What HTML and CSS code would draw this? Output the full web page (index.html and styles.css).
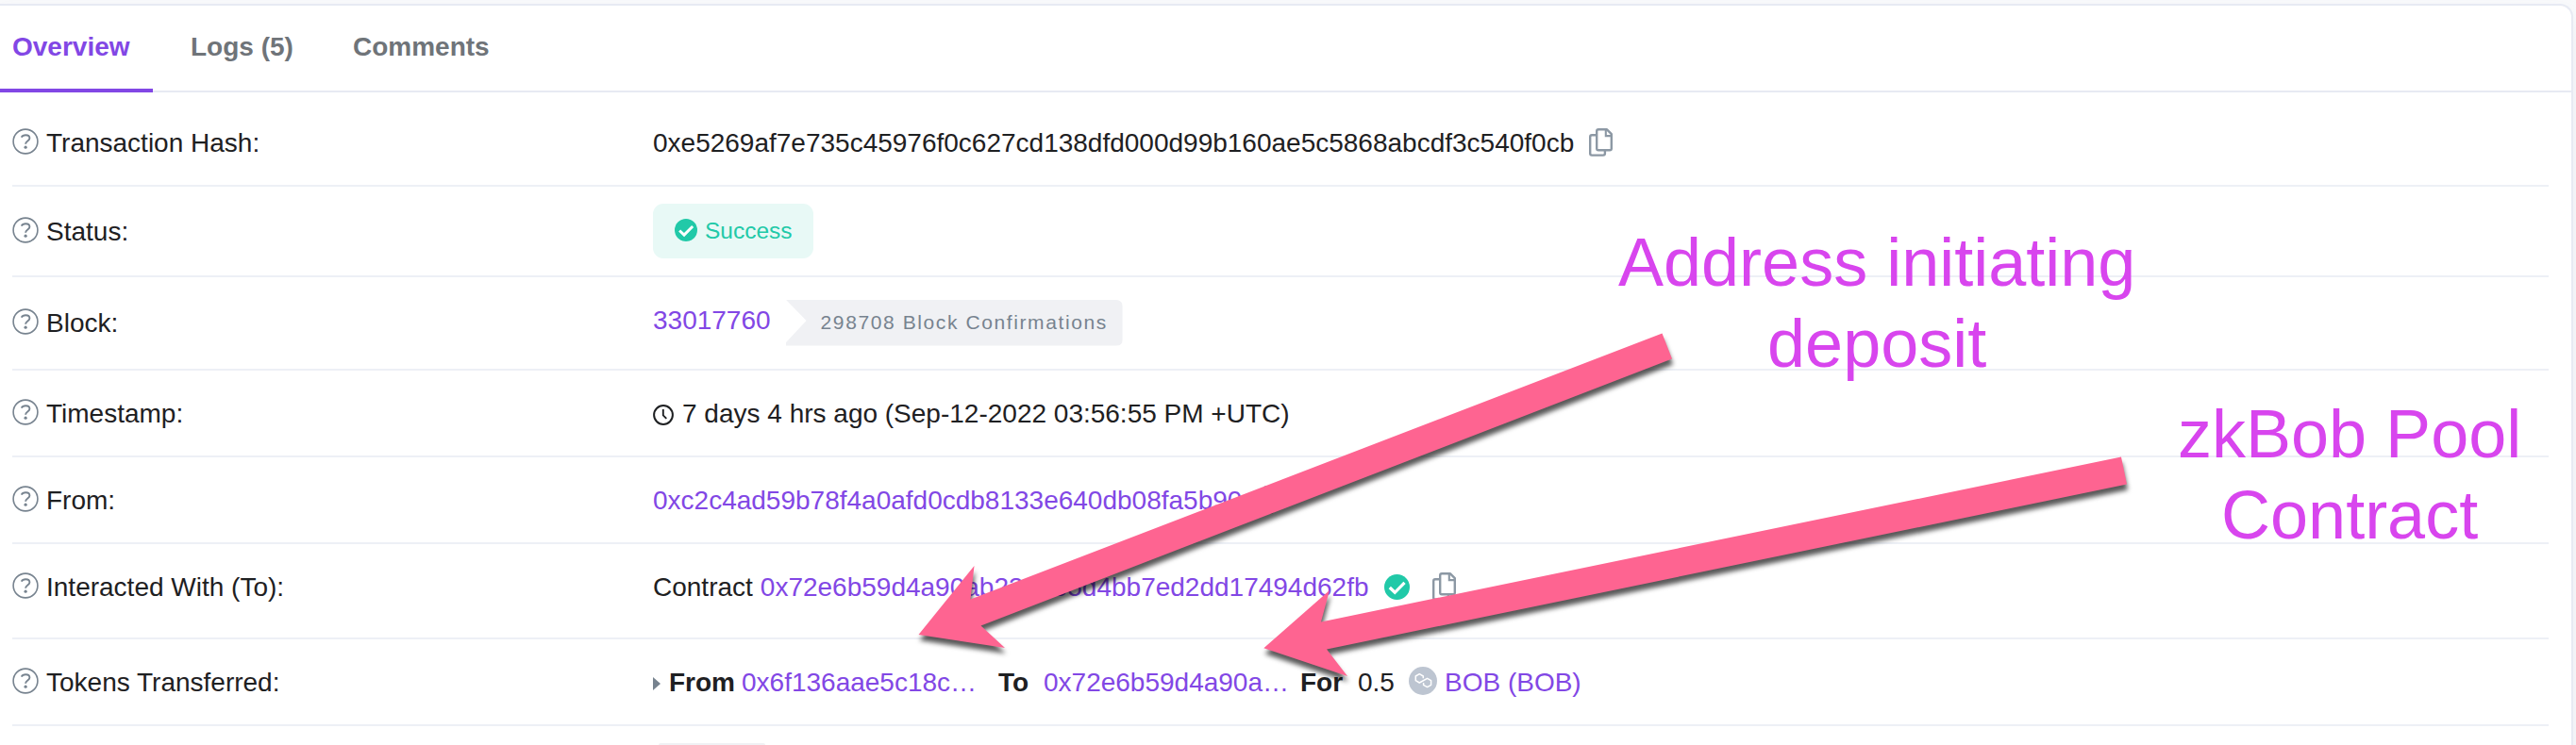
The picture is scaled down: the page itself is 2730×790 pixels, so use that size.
FILE: index.html
```html
<!DOCTYPE html>
<html lang="en">
<head>
<meta charset="utf-8">
<title>Transaction Details</title>
<link rel="stylesheet" href="styles.css">
</head>
<body>
<svg class="defs" aria-hidden="true">
  <symbol id="help" viewBox="0 0 28 28">
    <circle cx="14" cy="14" r="12.900" fill="none" stroke="currentColor" stroke-width="1.600"/>
    <path d="M9.700 9.600C10.600 8 12 7.300 14.200 7.300C16.800 7.300 18.400 8.600 18.400 10.600C18.400 13.700 14.100 13.500 14.100 16.800" fill="none" stroke="currentColor" stroke-width="1.900"/>
    <circle cx="14.100" cy="20.200" r="1.600" fill="currentColor"/>
  </symbol>
  <symbol id="copy" viewBox="0 0 25 30">
    <path d="M8 7.200H3Q1.200 7.200 1.200 9.100V26.800Q1.200 28.600 3 28.600H15Q16.900 28.600 16.900 26.800V24" fill="none" stroke="currentColor" stroke-width="2.400"/>
    <path d="M10 1.300H19L23.800 6.200V21.500Q23.800 23.300 22 23.300H10Q8.200 23.300 8.200 21.500V3.100Q8.200 1.300 10 1.300Z" fill="none" stroke="currentColor" stroke-width="2.400" stroke-linejoin="round"/>
    <path d="M17.800 1.600V8.100H23.800" fill="none" stroke="currentColor" stroke-width="2.100"/>
  </symbol>
  <symbol id="check" viewBox="0 0 28 28">
    <circle cx="14" cy="14" r="14" fill="currentColor"/>
    <path d="M6 14.500L11.700 20L22.300 9.300" fill="none" class="tick" stroke-width="3.400"/>
  </symbol>
</svg>

<main class="card">
  <nav class="tabs">
    <a class="tab active">Overview</a>
    <a class="tab logs">Logs (5)</a>
    <a class="tab">Comments</a>
  </nav>
  <section class="details">
    <div class="row r-hash">
      <div class="label"><svg class="help"><use href="#help"/></svg>Transaction Hash:</div>
      <div class="value"><span>0xe5269af7e735c45976f0c627cd138dfd000d99b160ae5c5868abcdf3c540f0cb</span><svg class="copy"><use href="#copy"/></svg></div>
    </div>
    <div class="row r-status">
      <div class="label"><svg class="help"><use href="#help"/></svg>Status:</div>
      <div class="value"><span class="success"><svg><use href="#check"/></svg>Success</span></div>
    </div>
    <div class="row r-block">
      <div class="label"><svg class="help"><use href="#help"/></svg>Block:</div>
      <div class="value"><a class="number">33017760</a><span class="confirm">298708 Block Confirmations</span></div>
    </div>
    <div class="row r-time">
      <div class="label"><svg class="help"><use href="#help"/></svg>Timestamp:</div>
      <div class="value"><svg class="clock" viewBox="0 0 22 22"><circle cx="11" cy="11" r="9.900" fill="none" stroke="currentColor" stroke-width="2"/><path d="M10.800 5V11.300L14.300 14.800" fill="none" stroke="currentColor" stroke-width="1.900"/></svg><span>7 days 4 hrs ago (Sep-12-2022 03:56:55 PM +UTC)</span></div>
    </div>
    <div class="row r-from">
      <div class="label"><svg class="help"><use href="#help"/></svg>From:</div>
      <div class="value"><a>0xc2c4ad59b78f4a0afd0cdb8133e640db08fa5b90</a><svg class="copy"><use href="#copy"/></svg></div>
    </div>
    <div class="row r-to">
      <div class="label"><svg class="help"><use href="#help"/></svg>Interacted With (To):</div>
      <div class="value"><span class="kind">Contract</span><a>0x72e6b59d4a90ab232e55d4bb7ed2dd17494d62fb</a><svg class="verified"><use href="#check"/></svg><svg class="copy"><use href="#copy"/></svg></div>
    </div>
    <div class="row r-tokens">
      <div class="label"><svg class="help"><use href="#help"/></svg>Tokens Transferred:</div>
      <div class="value">
        <svg class="caret" viewBox="0 0 8 14"><path d="M0 0L8 7L0 14Z" fill="currentColor"/></svg>
        <b class="t-from">From</b><a class="t-src">0x6f136aae5c18c…</a>
        <b class="t-to">To</b><a class="t-dst">0x72e6b59d4a90a…</a>
        <b class="t-for">For</b><span class="t-amount">0.5</span>
        <svg class="token" viewBox="0 0 30 30"><circle cx="15" cy="15" r="15" fill="#bdc5d1"/><path d="M15.300 12.300V10L11.300 7.700L7.300 10V14.700L11.300 17L19.600 12.300L23.600 14.600V19.300L19.600 21.600L15.600 19.300V17" fill="none" stroke="#fff" stroke-width="1.500" stroke-linejoin="round"/></svg>
        <a>BOB (BOB)</a>
      </div>
    </div>
    <div class="row r-next"><div class="label"></div><span class="stub"></span></div>
  </section>
</main>

<svg class="arrows" viewBox="0 0 2730 790" aria-hidden="true">
  <polygon points="973.500,673 1032.500,600 1028.500,635.500 1761.500,353.500 1772,380.500 1039.500,663.500 1065,687"/>
  <polygon points="1339.300,687.300 1409,626 1400,659.500 2248,484.500 2254,513.500 1406,688.500 1428,717"/>
</svg>
<p class="note note-address">Address initiating<br>deposit</p>
<p class="note note-pool">zkBob Pool<br>Contract</p>
</body>
</html>
```
FILE: styles.css
```css
* { box-sizing: border-box; }

body {
  margin: 0;
  width: 2730px;
  height: 790px;
  overflow: hidden;
  position: relative;
  padding-top: 4px;
  background: #f8f9fb;
  color: #1e2022;
  font: 28px/42px "Liberation Sans", Arial, sans-serif;
}

svg { flex: none; }
.defs { display: none; }
.tick { stroke: #fff; }

.card {
  width: 2727px;
  height: 786px;
  overflow: hidden;
  background: #fff;
  border: 2px solid #e7eaf3;
  border-left: 0;
  border-bottom: 0;
  border-radius: 0 14px 0 0;
  box-shadow: 0 16px 24px rgba(189, 197, 209, .2);
}

.tabs {
  display: flex;
  height: 92px;
  border-bottom: 2px solid #e7eaf3;
}

.tab {
  height: 92px;
  padding: 23px 24px 0 26px;
  margin-right: 14px;
  color: #6f7479;
  font-weight: bold;
  white-space: nowrap;
}
.tab.active {
  width: 162px;
  padding-left: 13px;
  color: #8247e5;
  border-bottom: 4px solid #8247e5;
}
.tab.logs { width: 158px; padding-right: 0; }

.details { padding: 8px 24px 0 13px; }

.row {
  display: flex;
  align-items: flex-start;
  padding-top: 25px;
  border-bottom: 2px solid #edf0f6;
}
.r-hash { height: 92px; }
.r-status { height: 96px; padding-top: 27px; }
.r-block { height: 99px; padding-top: 28px; }
.r-time, .r-from, .r-tokens { height: 92px; }
.r-to { height: 101px; }
.r-next { border: 0; height: 20px; padding-top: 18px; }

.label {
  display: flex;
  width: 679px;
  flex: none;
}
.help {
  width: 28px;
  height: 28px;
  margin: 5px 8px 0 0;
  color: #77838f;
}

.value {
  display: flex;
  height: 42px;
  align-items: center;
  white-space: nowrap;
}
.value a { color: #8247e5; }

.copy {
  width: 25px;
  height: 30px;
  margin: -2px 0 0 16px;
  color: #8c98a4;
}

.success {
  display: flex;
  align-items: center;
  width: 170px;
  height: 58px;
  margin-top: -2px;
  padding-left: 23px;
  border-radius: 11px;
  background: #e8f9f6;
  color: #21c9a8;
  font-size: 24.500px;
}
.success svg { width: 24px; height: 24px; margin: -2px 8px 0 0; }
.success .tick { stroke: #e8f9f6; }

.number { margin-top: -6px; }
.confirm {
  height: 49px;
  width: 357px;
  margin: -2px 0 0 16px;
  padding-left: 37px;
  border-radius: 0 7px 7px 0;
  background: #f0f1f4;
  clip-path: polygon(0 0, 100% 0, 100% 100%, 0 100%, 0 94%, 22px 46%);
  color: #77838f;
  font-size: 21px;
  line-height: 48px;
  letter-spacing: 1.600px;
}

.clock { width: 22px; height: 22px; margin: 1px 9px 0 0; }

.kind { margin-right: 8px; }
.verified { width: 27px; height: 27px; margin: -2px 0 0 16px; color: #21c9a8; }
.r-to .copy { margin-left: 24px; }

.caret { width: 8px; height: 14px; margin: 1px 9px 0 0; color: #77838f; }
.t-from { width: 77px; }
.t-src { width: 272px; }
.t-to { width: 48px; }
.t-dst { width: 272px; }
.t-for { width: 61px; }
.t-amount { width: 54px; }
.token { width: 30px; height: 30px; margin: -5px 8px 0 0; }

.stub {
  width: 113px;
  height: 2px;
  margin-left: 6px;
  border-radius: 2px 2px 0 0;
  background: #f0f1f4;
}

.arrows {
  position: absolute;
  left: 0;
  top: 0;
  width: 2730px;
  height: 790px;
}
.arrows polygon {
  fill: #fe6491;
  filter: drop-shadow(1px 6px 2.500px rgba(0, 0, 0, .65));
}

.note {
  position: absolute;
  margin: 0;
  color: #d845ee;
  font-size: 72px;
  line-height: 86px;
  text-align: center;
  white-space: nowrap;
}
.note-address { left: 1715px; top: 235px; }
.note-pool { left: 2308px; top: 417px; }
```
